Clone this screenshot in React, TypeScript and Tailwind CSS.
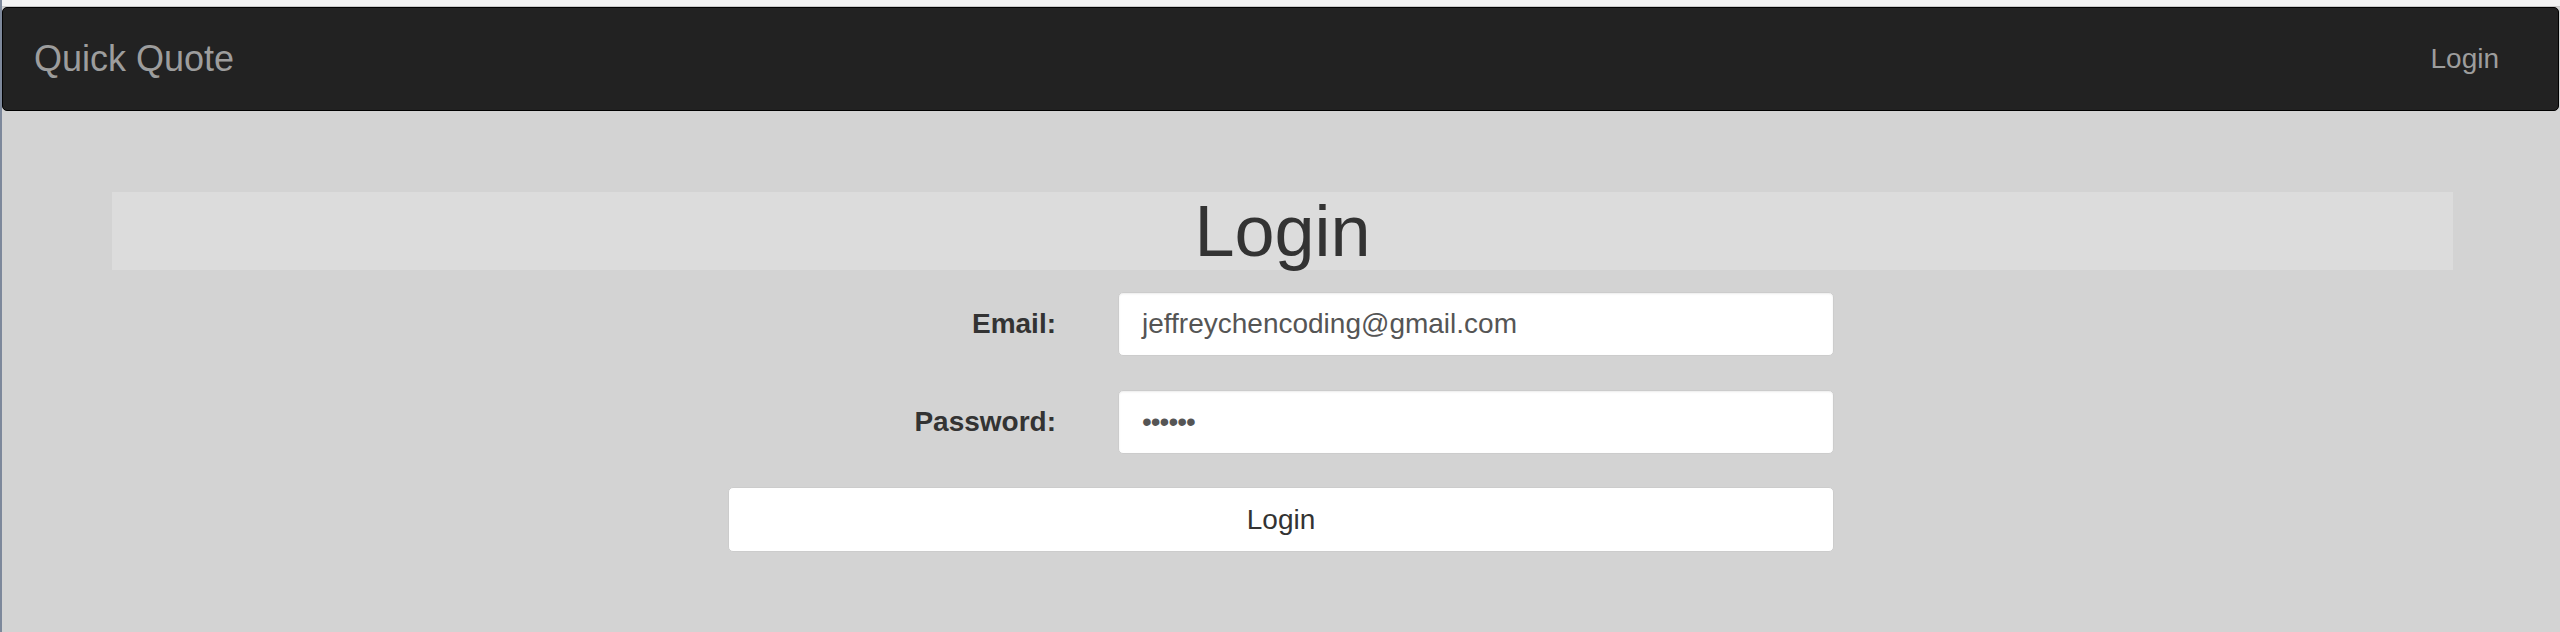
import React from "react";

export default function App() {
  const font = { fontFamily: '"Liberation Sans", Arial, Helvetica, sans-serif' };
  return (
    <div className="w-[2560px] h-[632px] flex bg-[#d3d3d3] overflow-hidden" style={font}>
      <div className="w-[2px] h-full bg-[#7d889b] shrink-0" />
      <div className="flex-1 flex flex-col">
        <div className="h-[7px] bg-[#f2f2f2] border-b border-[#c8c8c8]" />
        <nav className="h-[104px] bg-[#222222] border border-black rounded-[5px] flex items-center justify-between pl-[31px] pr-[59px] mr-[1px]">
          <span className="text-[36px] text-[#9d9d9d] leading-none">Quick Quote</span>
          <span className="text-[28px] text-[#9d9d9d] leading-none">Login</span>
        </nav>
        <div className="mt-[81px] ml-[110px] mr-[107px] h-[78px] bg-[#dcdcdc] flex justify-center">
          <h1 className="text-[72px] leading-[78px] text-[#333333] font-normal">Login</h1>
        </div>
        <div className="w-[1106px] ml-[726px] mt-[22px] flex flex-col">
          <div className="flex items-center h-[64px]">
            <div className="w-[328px] text-right text-[28px] font-bold text-[#333333]">Email:</div>
            <div className="ml-[62px] flex-1 h-[64px] bg-white rounded-[5px] border border-[#cccccc] shadow-[inset_0_1px_2px_rgba(0,0,0,0.08)] flex items-center pl-[23px] text-[28px] text-[#555555]">
              jeffreychencoding@gmail.com
            </div>
          </div>
          <div className="flex items-center h-[64px] mt-[34px]">
            <div className="w-[328px] text-right text-[28px] font-bold text-[#333333]">Password:</div>
            <div className="ml-[62px] flex-1 h-[64px] bg-white rounded-[5px] border border-[#cccccc] shadow-[inset_0_1px_2px_rgba(0,0,0,0.08)] flex items-center pl-[23px] text-[28px] text-[#555555] tracking-[-1px]">
              ••••••
            </div>
          </div>
          <button className="mt-[33px] h-[65px] w-full bg-white rounded-[5px] border border-[#cccccc] text-[28px] text-[#333333] flex items-center justify-center">
            Login
          </button>
        </div>
      </div>
    </div>
  );
}
